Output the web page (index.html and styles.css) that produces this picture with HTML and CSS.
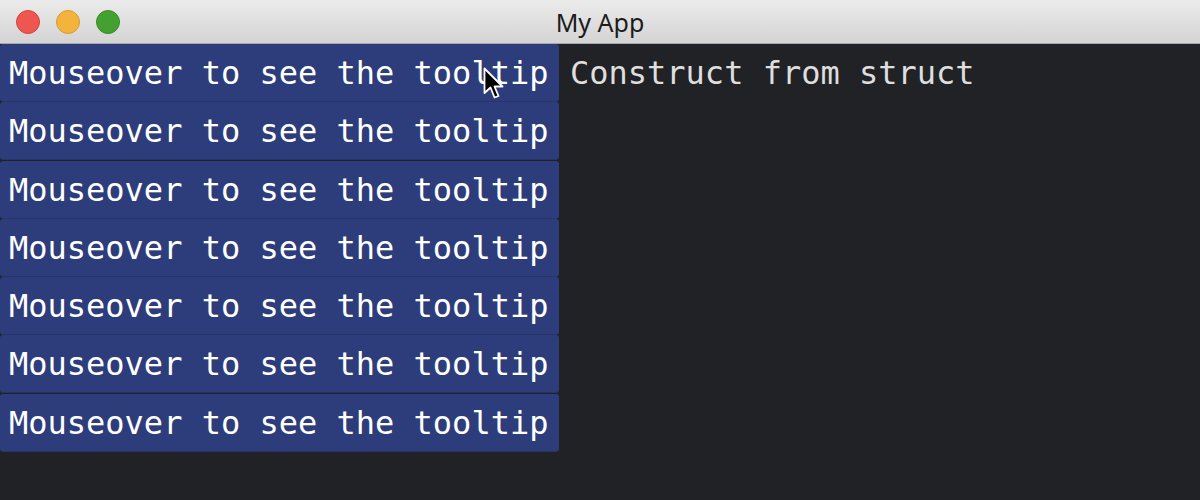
FILE: index.html
```html
<!DOCTYPE html>
<html>
<head>
<meta charset="utf-8">
<title>My App</title>
<link rel="stylesheet" href="styles.css">
</head>
<body>
<div class="window">
  <div class="titlebar">
    <div class="lights">
      <span class="light red"></span>
      <span class="light yellow"></span>
      <span class="light green"></span>
    </div>
    <div class="title">My App</div>
  </div>
  <div class="content">
    <div class="buttons">
      <div class="btn">Mouseover to see the tooltip</div>
      <div class="btn">Mouseover to see the tooltip</div>
      <div class="btn">Mouseover to see the tooltip</div>
      <div class="btn">Mouseover to see the tooltip</div>
      <div class="btn">Mouseover to see the tooltip</div>
      <div class="btn">Mouseover to see the tooltip</div>
      <div class="btn">Mouseover to see the tooltip</div>
    </div>
    <div class="label">Construct from struct</div>
    <svg class="cursor" width="24" height="34" viewBox="0 0 24 34">
      <path d="M1.5 1.5 L1.5 26 L7.5 20.5 L11.5 30.5 L15.5 29 L11.5 19.5 L19.5 19.5 Z" fill="#000" stroke="#fff" stroke-width="1.8" stroke-linejoin="round"/>
    </svg>
  </div>
</div>
</body>
</html>
```
FILE: styles.css
```css
* { box-sizing: border-box; }
html, body {
  margin: 0;
  padding: 0;
  width: 1200px;
  height: 500px;
  overflow: hidden;
  background: #212226;
}
.window {
  width: 1200px;
  height: 500px;
  display: flex;
  flex-direction: column;
}
.titlebar {
  position: relative;
  height: 44px;
  flex: none;
  background: linear-gradient(#ebebeb, #d4d4d4);
  border-bottom: 1px solid #a9a9a9;
  display: flex;
  align-items: center;
  justify-content: center;
}
.lights {
  position: absolute;
  left: 16px;
  top: 10px;
  display: flex;
  gap: 16px;
}
.light {
  width: 24px;
  height: 24px;
  border-radius: 50%;
  display: block;
}
.red { background: #ee5750; border: 1px solid #d5443d; }
.yellow { background: #f2b43d; border: 1px solid #d89d2c; }
.green { background: #44a030; border: 1px solid #3a8a27; }
.title {
  font-family: "Noto Sans", "Liberation Sans", sans-serif;
  font-size: 25px;
  line-height: 30px;
  color: #1c1c1c;
  margin-top: 0;
}
.content {
  position: relative;
  flex: 1;
  display: flex;
  align-items: flex-start;
  background: #212226;
}
.buttons {
  display: flex;
  flex-direction: column;
  gap: 1.3px;
  width: 559px;
}
.btn {
  height: 57px;
  background: #2d3d7b;
  border-radius: 3px;
  color: #ffffff;
  font-family: "DejaVu Sans Mono", monospace;
  font-size: 32px;
  line-height: 55px;
  padding-top: 2px;
  padding-left: 9px;
  white-space: nowrap;
  box-shadow: 0 1px 0 #263469;
}
.label {
  margin-left: 11px;
  color: #dedede;
  font-family: "DejaVu Sans Mono", monospace;
  font-size: 32px;
  line-height: 55px;
  padding-top: 2px;
  white-space: nowrap;
}
.cursor {
  position: absolute;
  left: 483px;
  top: 23px;
}
```
